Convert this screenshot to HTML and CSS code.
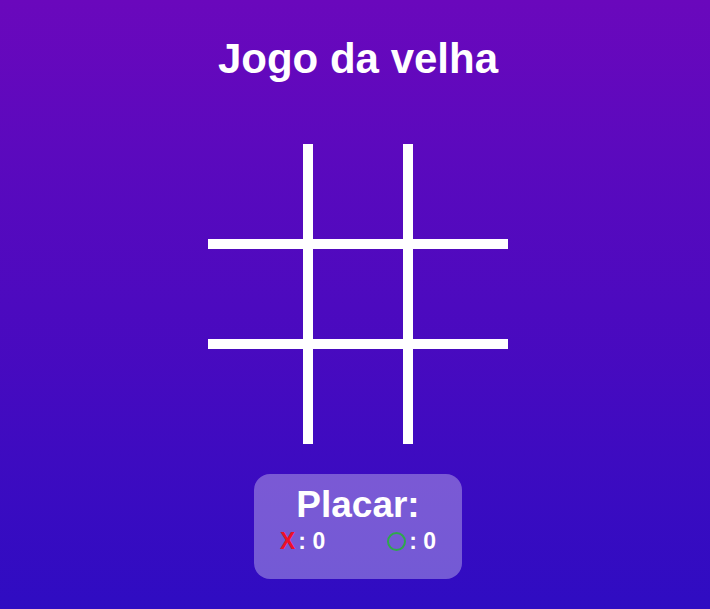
FILE: index.html
```html
<!DOCTYPE html>
<html lang="pt">
<head>
<meta charset="utf-8">
<title>Jogo da velha</title>
<link rel="stylesheet" href="styles.css">
</head>
<body>
<main class="page">
  <h1 class="title">Jogo da velha</h1>
  <div class="board">
    <div class="cell c-tl"></div>
    <div class="cell c-tm"></div>
    <div class="cell c-tr"></div>
    <div class="cell c-ml"></div>
    <div class="cell c-mm"></div>
    <div class="cell c-mr"></div>
    <div class="cell c-bl"></div>
    <div class="cell c-bm"></div>
    <div class="cell c-br"></div>
  </div>
  <section class="score">
    <h2 class="score-title">Placar:</h2>
    <div class="score-row">
      <span class="score-item"><span class="mark-x">X</span>: 0</span>
      <span class="score-item"><span class="mark-o"></span>: 0</span>
    </div>
  </section>
</main>
</body>
</html>
```
FILE: styles.css
```css
html, body {
  margin: 0;
  padding: 0;
  height: 100%;
}
body {
  background: linear-gradient(to bottom, #6a08bc 0%, #2f0cc2 100%);
  font-family: "Liberation Sans", Arial, sans-serif;
  color: #ffffff;
}
.page {
  display: flex;
  flex-direction: column;
  align-items: center;
  padding-top: 35px;
  padding-left: 6px;
}
.title {
  margin: 0;
  font-size: 42px;
  line-height: 48px;
  font-weight: bold;
}
.board {
  margin-top: 61px;
  display: grid;
  grid-template-columns: repeat(3, 100px);
  grid-template-rows: repeat(3, 100px);
}
.cell {
  box-sizing: border-box;
  border: 0 solid #ffffff;
}
.c-tl { border-right-width: 5px; border-bottom-width: 5px; }
.c-tm { border-left-width: 5px; border-right-width: 5px; border-bottom-width: 5px; }
.c-tr { border-left-width: 5px; border-bottom-width: 5px; }
.c-ml { border-top-width: 5px; border-right-width: 5px; border-bottom-width: 5px; }
.c-mm { border-width: 5px; }
.c-mr { border-top-width: 5px; border-left-width: 5px; border-bottom-width: 5px; }
.c-bl { border-top-width: 5px; border-right-width: 5px; }
.c-bm { border-top-width: 5px; border-left-width: 5px; border-right-width: 5px; }
.c-br { border-top-width: 5px; border-left-width: 5px; }
.score {
  margin-top: 30px;
  box-sizing: border-box;
  width: 208px;
  height: 105px;
  padding-top: 10px;
  border-radius: 16px;
  background: rgba(255, 255, 255, 0.32);
  display: flex;
  flex-direction: column;
  align-items: center;
}
.score-title {
  margin: 0;
  font-size: 37px;
  line-height: 42px;
  font-weight: bold;
}
.score-row {
  margin-top: 2px;
  display: flex;
  gap: 62px;
  font-size: 23px;
  line-height: 26px;
  font-weight: bold;
}
.score-item {
  display: flex;
  align-items: center;
}
.mark-x {
  color: #ee1028;
  margin-right: 3px;
}
.mark-o {
  box-sizing: border-box;
  width: 19px;
  height: 19px;
  border: 2.5px solid #2ea84c;
  border-radius: 50%;
  margin-right: 3px;
}
```
